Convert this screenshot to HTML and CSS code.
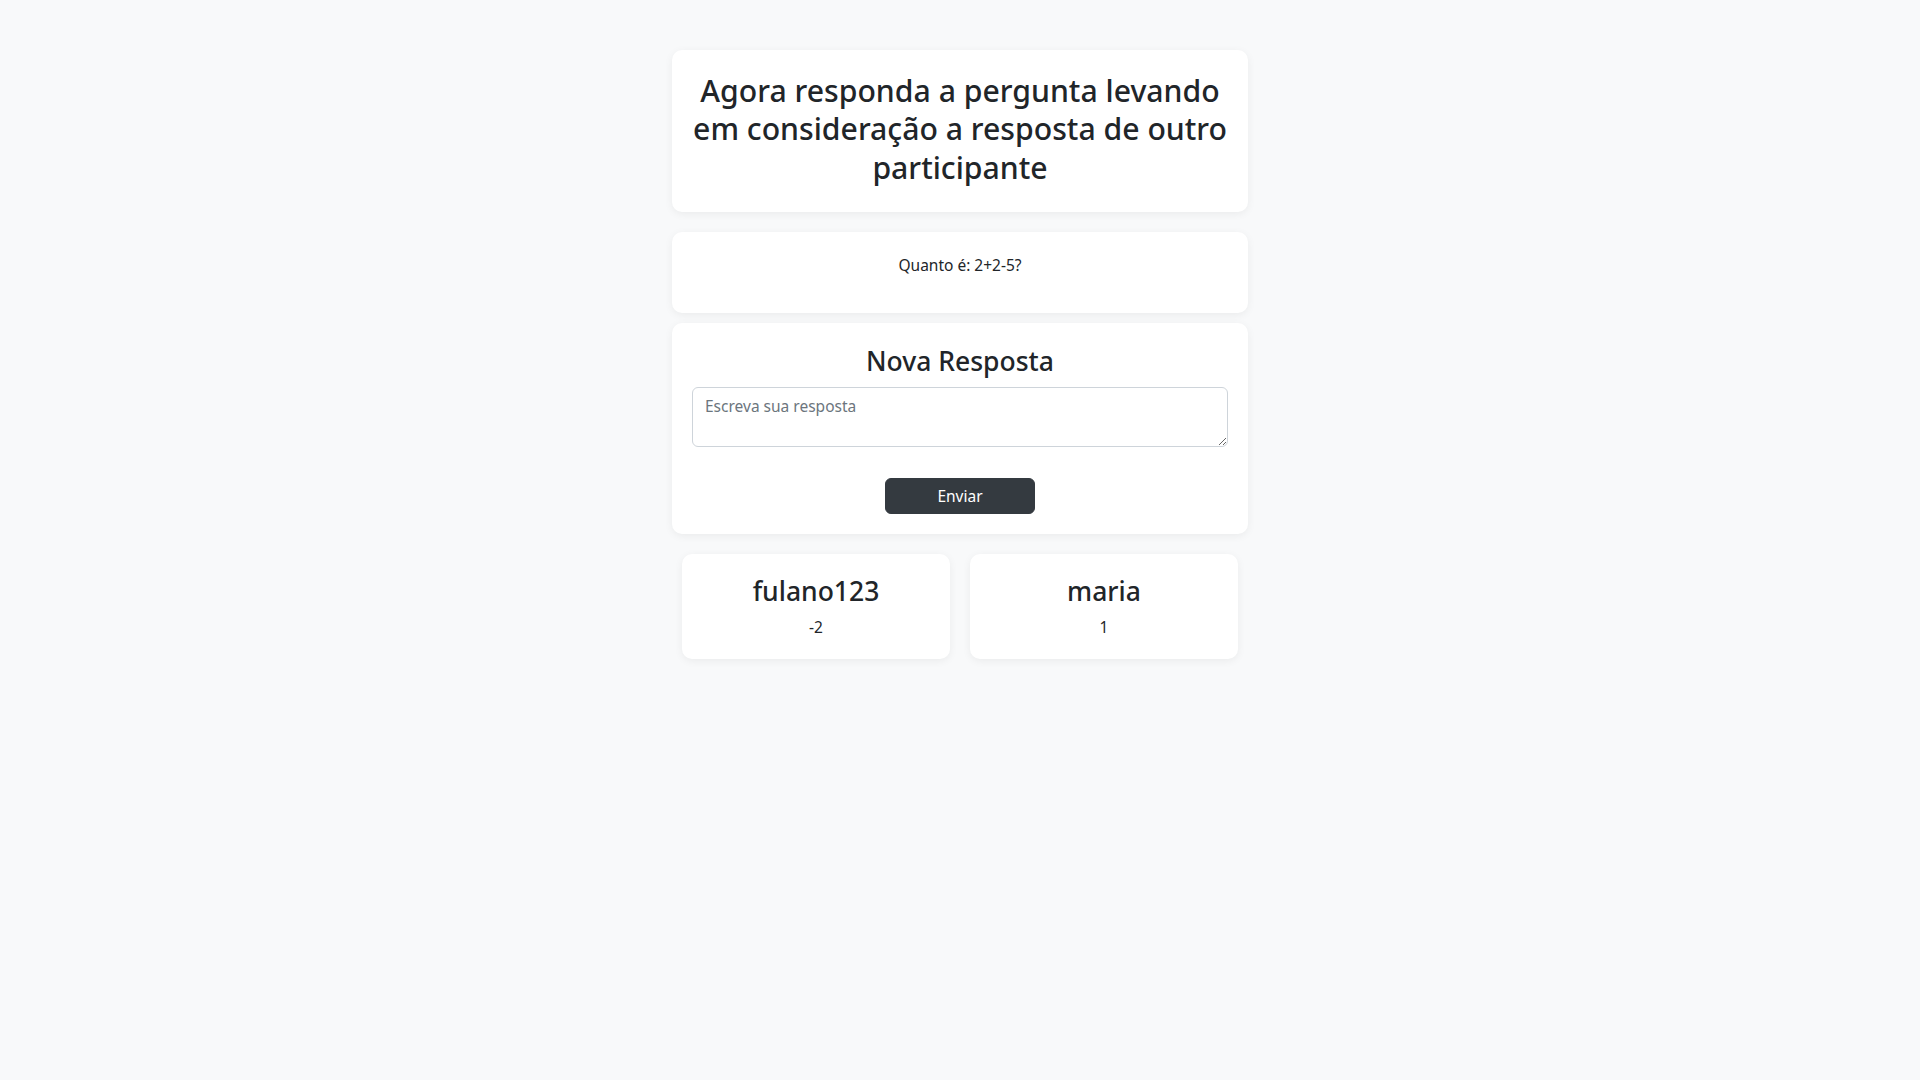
FILE: index.html
```html
<!DOCTYPE html>
<html lang="pt-BR">
<head>
<meta charset="utf-8">
<title>Resposta</title>
<link rel="stylesheet" href="styles.css">
</head>
<body>
<main class="page">
  <section class="card card-title">
    <h2 class="title">Agora responda a pergunta levando em consideração a resposta de outro participante</h2>
  </section>
  <section class="card card-question">
    <p class="question">Quanto é: 2+2-5?</p>
  </section>
  <section class="card card-form">
    <h3 class="form-title">Nova Resposta</h3>
    <form class="answer-form">
      <textarea class="answer-input" rows="2" placeholder="Escreva sua resposta"></textarea>
      <button type="button" class="btn-send">Enviar</button>
    </form>
  </section>
  <div class="players">
    <div class="player-col">
      <div class="card player">
        <h3 class="player-name">fulano123</h3>
        <p class="player-score">-2</p>
      </div>
    </div>
    <div class="player-col">
      <div class="card player">
        <h3 class="player-name">maria</h3>
        <p class="player-score">1</p>
      </div>
    </div>
  </div>
</main>
</body>
</html>
```

FILE: styles.css
```css
* { box-sizing: border-box; }
html, body {
  margin: 0;
  padding: 0;
}
body {
  background: #f8f9fa;
  color: #212529;
  font-family: "Noto Sans", "Open Sans", sans-serif;
  font-size: 15.5px;
  line-height: 24px;
}
.page {
  width: 576px;
  margin: 0 auto;
  padding-top: 50px;
  display: flex;
  flex-direction: column;
}
.card {
  background: #fff;
  border-radius: 10px;
  box-shadow: 0 2px 8px rgba(0, 0, 0, 0.06);
  padding: 20px;
  text-align: center;
}
.card-title {
  margin-bottom: 20px;
  padding-top: 22px;
  padding-left: 18px;
  padding-right: 18px;
}
.title {
  margin: 0 0 5px;
  font-size: 30.2px;
  font-weight: 500;
  line-height: 38.4px;
}
.card-question {
  margin-bottom: 10px;
}
.question {
  margin: 1px 0 16px;
}
.form-title {
  margin: 2px 0 8px;
  font-size: 26.5px;
  font-weight: 500;
  line-height: 33.6px;
}
.answer-form {
  display: flex;
  flex-direction: column;
  align-items: center;
}
.answer-input {
  width: 100%;
  height: 60px;
  display: block;
  padding: 6px 12px;
  font: inherit;
  line-height: 24px;
  color: #212529;
  border: 1px solid #ced4da;
  border-radius: 6px;
  resize: vertical;
  margin-bottom: 31px;
}
.answer-input::placeholder {
  color: #6c757d;
}
.btn-send {
  width: 150px;
  height: 36px;
  padding: 5px 12px;
  font: inherit;
  line-height: 24px;
  color: #fff;
  background: #343a40;
  border: 1px solid #343a40;
  border-radius: 6px;
}
.players {
  display: flex;
  margin-top: 10px;
}
.player-col {
  flex: 1 1 0;
  padding: 10px;
}
.player-name {
  margin: 1px 0 7px;
  font-size: 26.5px;
  font-weight: 500;
  line-height: 33.6px;
}
.player-score {
  margin: 0;
}
```
